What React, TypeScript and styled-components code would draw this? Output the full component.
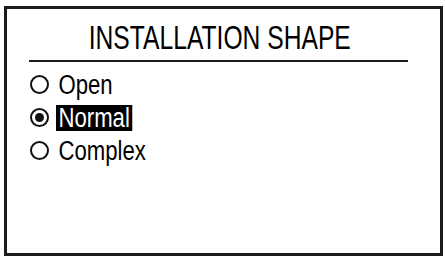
import styled, { createGlobalStyle } from 'styled-components';

const GlobalStyle = createGlobalStyle`
  html, body {
    margin: 0;
    padding: 0;
    background: #ffffff;
  }
`;

const FONT = `"Liberation Sans", Arial, sans-serif`;

const Frame = styled.div`
  box-sizing: border-box;
  width: 439px;
  height: 250px;
  margin: 6px 0 0 4px;
  border: 3px solid #1c1c1c;
  display: flex;
  flex-direction: column;
  font-family: ${FONT};
  color: #000;
`;

const Title = styled.h1`
  margin: 9px 0 0;
  padding-right: 7px;
  font-size: 34px;
  font-weight: normal;
  line-height: 38px;
  text-align: center;
`;

// the panel font is a narrow sans: squeeze Liberation Sans to match
const TitleText = styled.span`
  display: inline-block;
  transform: scaleX(0.725);
  transform-origin: center;
`;

const Rule = styled.div`
  height: 2px;
  background: #1c1c1c;
  margin: 4px 32px 0 22px;
`;

const OptionList = styled.ul`
  list-style: none;
  margin: 6px 0 0;
  padding: 0 0 0 23px;
  display: flex;
  flex-direction: column;
`;

const Option = styled.li`
  display: flex;
  align-items: center;
  height: 33px;
  gap: 7px;
`;

const Radio = styled.span<{ $checked: boolean }>`
  box-sizing: border-box;
  flex: none;
  width: 19px;
  height: 19px;
  border: 2px solid #111;
  border-radius: 50%;
  display: flex;
  align-items: center;
  justify-content: center;

  &::after {
    content: '';
    display: ${({ $checked }) => ($checked ? 'block' : 'none')};
    width: 9px;
    height: 9px;
    border-radius: 50%;
    background: #111;
  }
`;

const Label = styled.span<{ $selected: boolean }>`
  display: inline-block;
  font-size: 27px;
  line-height: 26px;
  padding: 0 3px;
  transform: scaleX(0.82);
  transform-origin: left center;
  background: ${({ $selected }) => ($selected ? '#000' : 'transparent')};
  color: ${({ $selected }) => ($selected ? '#fff' : '#000')};
`;

const options = ['Open', 'Normal', 'Complex'];
const selected = 'Normal';

const App = () => (
  <>
    <GlobalStyle />
    <Frame>
      <Title>
        <TitleText>INSTALLATION SHAPE</TitleText>
      </Title>
      <Rule />
      <OptionList>
        {options.map((option) => (
          <Option key={option}>
            <Radio $checked={option === selected} />
            <Label $selected={option === selected}>{option}</Label>
          </Option>
        ))}
      </OptionList>
    </Frame>
  </>
);

export default App;
